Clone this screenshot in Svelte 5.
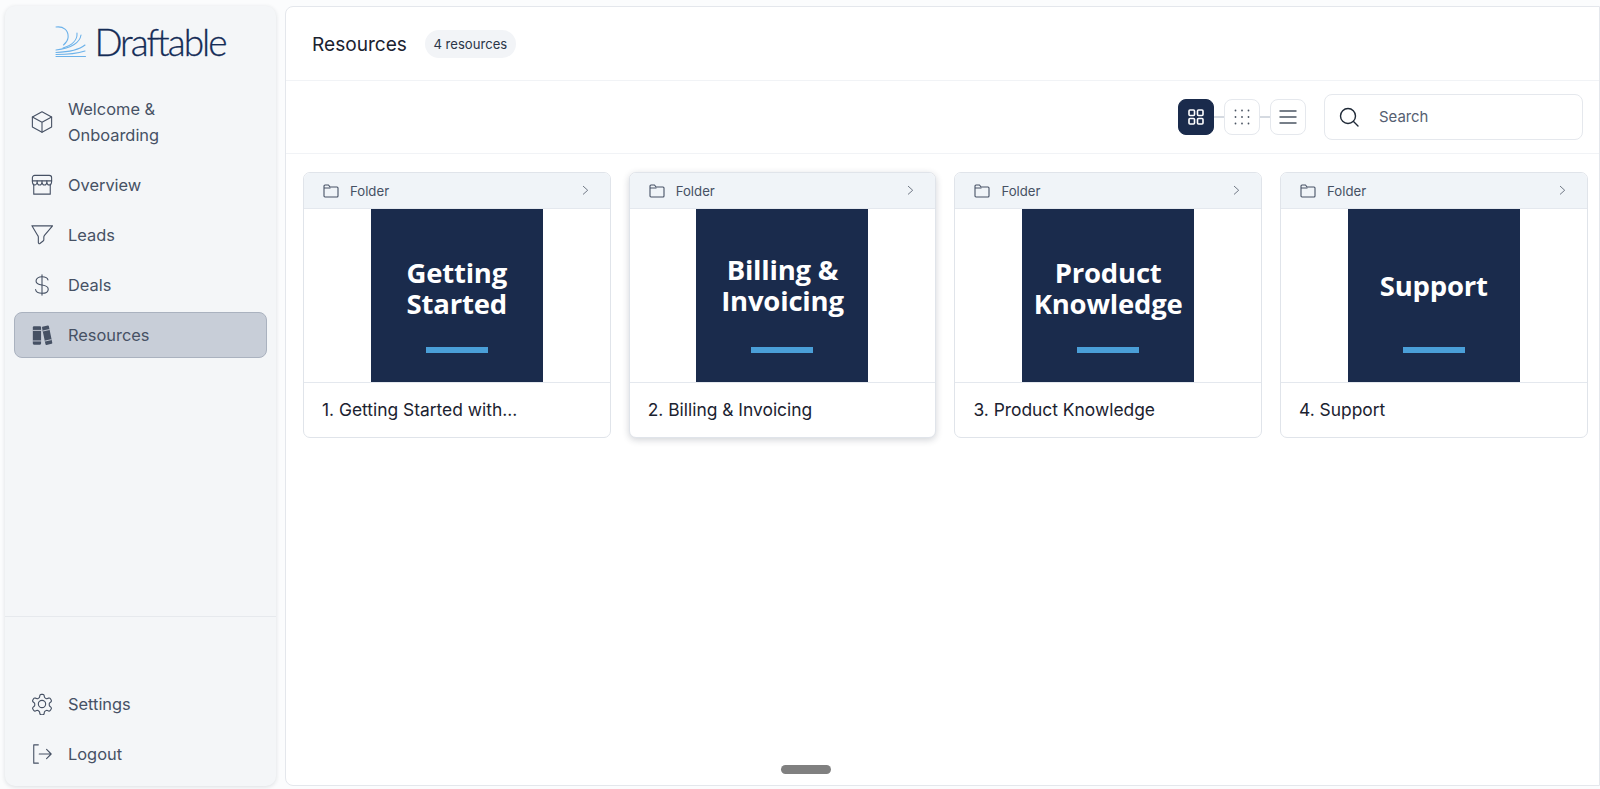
<script>
  // Sidebar entries and resource cards
  const navItems = [
    { label: 'Welcome & Onboarding', icon: 'cube' },
    { label: 'Overview', icon: 'store' },
    { label: 'Leads', icon: 'funnel' },
    { label: 'Deals', icon: 'dollar' },
    { label: 'Resources', icon: 'books', active: true }
  ]

  const footerItems = [
    { label: 'Settings', icon: 'gear' },
    { label: 'Logout', icon: 'logout' }
  ]

  const resources = [
    { title: '1. Getting Started with...', cover: ['Getting', 'Started'] },
    { title: '2. Billing & Invoicing', cover: ['Billing &', 'Invoicing'], raised: true, hovered: true },
    { title: '3. Product Knowledge', cover: ['Product', 'Knowledge'] },
    { title: '4. Support', cover: ['Support'], raised: true }
  ]
</script>

{#snippet navIcon(name)}
  <svg class="nav-icon" viewBox="0 0 24 24" fill="none" stroke="currentColor" stroke-width="1.2" stroke-linecap="round" stroke-linejoin="round">
    {#if name === 'cube'}
      <path d="M12 .8 22.500 6.500v11L12 23.200 1.500 17.500v-11z" />
      <path d="M1.500 6.500 12 12.200l10.500-5.700M12 12.200v11" />
    {:else if name === 'store'}
      <path d="M3 11v11h18V11" />
      <path d="M4 1.500h16a2.500 2.500 0 0 1 2.500 2.500v3.500h-21V4A2.500 2.500 0 0 1 4 1.500z" />
      <path d="M1.500 7.500c0 6 5.200 6 5.200 0 0 6 5.300 6 5.300 0 0 6 5.300 6 5.300 0 0 6 5.200 6 5.200 0" />
    {:else if name === 'funnel'}
      <path d="M1 2h22.500l-8.800 10.500c-.5.6-.7 1.100-.7 1.800v2.900c0 .6-.3 1-.8 1.400l-3.500 2.700c-.8.500-1.700 0-1.700-1V14.300c0-.7-.2-1.200-.7-1.800z" />
    {:else if name === 'dollar'}
      <path d="M12 1v22" />
      <path d="M18.500 6.500C18 4 15.500 3 12 3 8.500 3 5.500 4.700 5.500 7.500S8.500 11.500 12 12c3.500.5 6.800 1.500 6.800 4.500S15.500 21 12 21s-6.500-1.300-7-4" />
    {:else if name === 'books'}
      <rect x="2" y="2.500" width="9" height="20" rx="1.200" fill="currentColor" stroke="none" />
      <path d="m12.300 3 6-1.400a1 1 0 0 1 1.200.8l3.700 18a1 1 0 0 1-.8 1.200l-5.400 1.200a1 1 0 0 1-1.200-.8L12 4z" fill="currentColor" stroke="none" />
      <path d="M2 7h9M2 18.500h9M13.500 7.500l6.500-1.400M15.800 18.500l6.200-1.400" stroke="#c8ced8" stroke-width="1" />
    {:else if name === 'gear'}
      <path d="M9.600 2.900c.1-.8.800-1.400 1.600-1.400h1.600c.8 0 1.500.6 1.600 1.400l.2 1.400c.1.600.5 1 1 1.300l.7.400c.5.300 1.100.3 1.600.1l1.300-.5c.8-.3 1.600 0 2 .7l.8 1.400c.4.700.2 1.600-.4 2.100l-1.100.9c-.4.300-.7.900-.6 1.500v.8c0 .6.200 1.100.6 1.500l1.100.9c.6.500.8 1.400.4 2.100l-.8 1.400c-.4.700-1.200 1-2 .7l-1.300-.5c-.5-.2-1.100-.2-1.600.1l-.7.400c-.5.300-.9.700-1 1.300l-.2 1.400c-.1.800-.8 1.400-1.600 1.400h-1.600c-.8 0-1.500-.6-1.600-1.400l-.2-1.400c-.1-.6-.5-1-1-1.300l-.7-.4c-.5-.3-1.100-.3-1.600-.1l-1.300.5c-.8.300-1.600 0-2-.7l-.8-1.400c-.4-.7-.2-1.600.4-2.100l1.100-.9c.4-.4.600-.9.600-1.500v-.8c0-.6-.2-1.200-.6-1.500l-1.100-.9c-.6-.5-.8-1.400-.4-2.100l.8-1.400c.4-.7 1.200-1 2-.7l1.300.5c.5.200 1.100.2 1.600-.1l.7-.4c.5-.3.900-.7 1-1.300z" />
      <circle cx="12" cy="12" r="4" />
    {:else if name === 'logout'}
      <path d="M8 2H3v20h5" />
      <path d="M9 12h13M17 7l5 5-5 5" />
    {/if}
  </svg>
{/snippet}

<div class="shell">
  <aside class="sidebar">
    <div class="brand">
      <svg class="brand-mark" viewBox="0 0 32 31" fill="none" stroke="#6cb2ea" stroke-width="1.100" stroke-linecap="round">
        <path d="M1 1c7-1 13 3 12 11-.4 3-2 5-4.500 7" />
        <path d="M22 7c.5 7-5 12.500-14 15" />
        <path d="M26 9c-1 7-9 13.500-25 15" />
        <path d="M30 19c-6 5-16 7-29 7.500" />
        <path d="M1 28.500c11 0 20-.5 29-3.500" />
        <path d="M1 30.500h29.500" />
      </svg>
      <span class="brand-name">Draftable</span>
    </div>

    <nav class="nav">
      {#each navItems as item}
        <a class="nav-item" class:active={item.active} href="#{item.icon}">
          {@render navIcon(item.icon)}
          <span class="nav-label">{item.label}</span>
        </a>
      {/each}
    </nav>

    <nav class="nav nav-footer">
      {#each footerItems as item}
        <a class="nav-item" href="#{item.icon}">
          {@render navIcon(item.icon)}
          <span>{item.label}</span>
        </a>
      {/each}
    </nav>
  </aside>

  <main class="main">
    <header class="page-header">
      <h1>Resources</h1>
      <span class="count">4 resources</span>
    </header>

    <div class="toolbar">
      <div class="view-switch">
        <button class="view-btn selected" aria-label="Large grid">
          <svg viewBox="0 0 16 16" fill="none" stroke="currentColor" stroke-width="1.600">
            <rect x="1" y="1" width="5.500" height="5.500" rx="1" />
            <rect x="9.500" y="1" width="5.500" height="5.500" rx="1" />
            <rect x="1" y="9.500" width="5.500" height="5.500" rx="1" />
            <rect x="9.500" y="9.500" width="5.500" height="5.500" rx="1" />
          </svg>
        </button>
        <span class="view-link"></span>
        <button class="view-btn" aria-label="Small grid">
          <svg viewBox="0 0 16 16" fill="#4b5563">
            {#each [1.500, 8, 14.500] as y}
              {#each [1.500, 8, 14.500] as x}
                <circle cx={x} cy={y} r="0.900" />
              {/each}
            {/each}
          </svg>
        </button>
        <span class="view-link"></span>
        <button class="view-btn list" aria-label="List">
          <svg viewBox="0 0 18 14" fill="none" stroke="#4b5563" stroke-width="1.300">
            <path d="M.5 1h17M.5 7h17M.5 13h17" />
          </svg>
        </button>
      </div>

      <label class="search">
        <svg viewBox="0 0 20 20" fill="none" stroke="#1f2937" stroke-width="1.400" stroke-linecap="round">
          <circle cx="9" cy="9" r="7.500" />
          <path d="m14.500 14.500 4.500 4.500" />
        </svg>
        <input type="text" placeholder="Search" />
      </label>
    </div>

    <section class="cards">
      {#each resources as resource}
        <article class="card" class:hovered={resource.hovered}>
          <div class="card-head">
            <svg class="folder" viewBox="0 0 16 14" fill="none" stroke="currentColor" stroke-width="1.100" stroke-linejoin="round">
              <path d="M1 2a1 1 0 0 1 1-1h3.500l1.500 2h7a1 1 0 0 1 1 1v8a1 1 0 0 1-1 1H2a1 1 0 0 1-1-1z" />
              <path d="M1 4h6.500" />
            </svg>
            <span class="folder-label">Folder</span>
            <svg class="chevron" viewBox="0 0 8 12" fill="none" stroke="currentColor" stroke-width="1.100" stroke-linecap="round" stroke-linejoin="round">
              <path d="m1.500 1.500 5 4.500-5 4.500" />
            </svg>
          </div>
          <div class="card-media">
            <div class="cover">
              <div class="cover-title" class:raised={resource.raised}>
                {#each resource.cover as line}
                  <span>{line}</span>
                {/each}
              </div>
              <div class="cover-bar"></div>
            </div>
          </div>
          <div class="card-title">{resource.title}</div>
        </article>
      {/each}
    </section>

    <div class="handle"></div>
  </main>
</div>

<style>
  :global(body) {
    background: #fbfcfd;
    font-family: "Inter", "Liberation Sans", sans-serif;
    overflow: hidden;
  }

  .shell {
    display: flex;
    gap: 9px;
    height: 789px;
    box-sizing: border-box;
    padding: 6px 0 3px 5px;
  }

  .sidebar {
    display: flex;
    flex-direction: column;
    width: 271px;
    flex-shrink: 0;
    background: #f4f6f8;
    border-radius: 10px;
    box-shadow: 0 1px 4px rgba(30, 41, 59, 0.14);
  }

  .brand {
    display: flex;
    align-items: center;
    justify-content: center;
    gap: 7px;
    height: 71px;
    color: #142c57;
  }

  .brand-mark {
    width: 32px;
    height: 31px;
    flex-shrink: 0;
  }

  .brand-name {
    font-family: "Lato", sans-serif;
    font-size: 37px;
    font-weight: 300;
    letter-spacing: -2px;
    line-height: 1;
    -webkit-text-stroke: 0.3px #142c57;
  }

  .nav {
    display: flex;
    flex-direction: column;
    gap: 4px;
    padding: 9px 9px 10px;
  }

  .nav-footer {
    margin-top: auto;
    padding: 64px 9px 9px;
    border-top: 1px solid #e6e9ed;
  }

  .nav-item {
    display: flex;
    align-items: center;
    gap: 15px;
    min-height: 46px;
    box-sizing: border-box;
    padding: 9px 16px;
    border: 1px solid transparent;
    border-radius: 8px;
    color: #465164;
    font-size: 16.400px;
    font-weight: 400;
    line-height: 26px;
    text-decoration: none;
  }

  .nav-item.active {
    background: #c8ced8;
    border-color: #aab2bf;
  }

  .nav-label {
    max-width: 120px;
  }

  .nav-icon {
    width: 22px;
    height: 22px;
    flex-shrink: 0;
  }

  .main {
    position: relative;
    flex: 1;
    min-width: 0;
    background: #fff;
    border: 1px solid #e4e7ec;
    border-radius: 8px 0 0 8px;
  }

  .page-header {
    display: flex;
    align-items: center;
    gap: 18px;
    height: 74px;
    box-sizing: border-box;
    padding-left: 26px;
    border-bottom: 1px solid #f1f3f6;
  }

  h1 {
    margin: 0;
    color: #1b2230;
    font-size: 19.100px;
    font-weight: 400;
  }

  .count {
    padding: 0 8.500px;
    background: #f2f4f7;
    border-radius: 14px;
    color: #2b3648;
    font-size: 13.100px;
    line-height: 28px;
  }

  .toolbar {
    display: flex;
    align-items: center;
    justify-content: flex-end;
    gap: 18px;
    height: 73px;
    box-sizing: border-box;
    padding-right: 16px;
    border-bottom: 1px solid #f1f3f6;
  }

  .view-switch {
    display: flex;
    align-items: center;
  }

  .view-link {
    width: 10px;
    height: 2px;
    background: #d5dae1;
  }

  .view-btn {
    display: flex;
    align-items: center;
    justify-content: center;
    width: 36px;
    height: 36px;
    padding: 0;
    background: #fff;
    border: 1px solid #e5e8ed;
    border-radius: 8px;
    color: #4b5563;
  }

  .view-btn svg {
    width: 16px;
    height: 16px;
  }

  .view-btn.list svg {
    width: 18px;
    height: 14px;
  }

  .view-btn.selected {
    background: #1a2b4c;
    border-color: #1a2b4c;
    color: #fff;
  }

  .search {
    display: flex;
    align-items: center;
    gap: 18px;
    width: 259px;
    height: 46px;
    box-sizing: border-box;
    padding-left: 14px;
    border: 1px solid #e5e8ed;
    border-radius: 8px;
  }

  .search svg {
    width: 20px;
    height: 20px;
    flex-shrink: 0;
  }

  .search input {
    flex: 1;
    min-width: 0;
    border: 0;
    outline: 0;
    background: none;
    font: inherit;
    font-size: 14.900px;
  }

  .search input::placeholder {
    color: #566072;
    opacity: 1;
  }

  .cards {
    display: grid;
    grid-template-columns: repeat(4, 307.500px);
    gap: 18.200px;
    padding: 18px 0 0 17px;
  }

  .card {
    display: flex;
    flex-direction: column;
    box-sizing: border-box;
    height: 266px;
    background: #fff;
    border: 1px solid #e0e4ea;
    border-radius: 7px;
    overflow: hidden;
  }

  .card.hovered {
    box-shadow: 0 2px 7px rgba(30, 41, 59, 0.2);
  }

  .card-head {
    display: flex;
    align-items: center;
    height: 36px;
    flex-shrink: 0;
    box-sizing: border-box;
    padding: 0 21px 0 19px;
    background: #f0f4f8;
    border-bottom: 1px solid #e4e8ee;
    color: #465164;
  }

  .folder {
    width: 16px;
    height: 14px;
  }

  .folder-label {
    margin-left: 11px;
    font-size: 13.200px;
  }

  .chevron {
    width: 7px;
    height: 10.500px;
    margin-left: auto;
    color: #6b7280;
  }

  .card-media {
    display: flex;
    justify-content: center;
    height: 173px;
    flex-shrink: 0;
    border-bottom: 1px solid #e4e8ee;
  }

  .cover {
    display: flex;
    flex-direction: column;
    align-items: center;
    width: 172px;
    height: 173px;
    background: #1a2b4c;
  }

  .cover-title {
    display: flex;
    flex-direction: column;
    align-items: center;
    justify-content: center;
    height: 100px;
    margin-top: 29px;
    color: #fff;
    font-family: "Open Sans", sans-serif;
    font-size: 27.500px;
    font-weight: 700;
    letter-spacing: -0.200px;
    line-height: 31px;
  }

  .cover-title.raised {
    margin-top: 26px;
    margin-bottom: 3px;
  }

  .cover-bar {
    width: 62px;
    height: 6px;
    margin-top: 9px;
    background: #4a9fd8;
  }

  .card-title {
    flex: 1;
    display: flex;
    align-items: center;
    padding: 0 18px 1px;
    color: #1b2230;
    font-size: 17.400px;
    font-weight: 400;
  }

  .handle {
    position: absolute;
    left: 495px;
    bottom: 11px;
    width: 50px;
    height: 9px;
    background: #808080;
    border-radius: 5px;
  }
</style>
